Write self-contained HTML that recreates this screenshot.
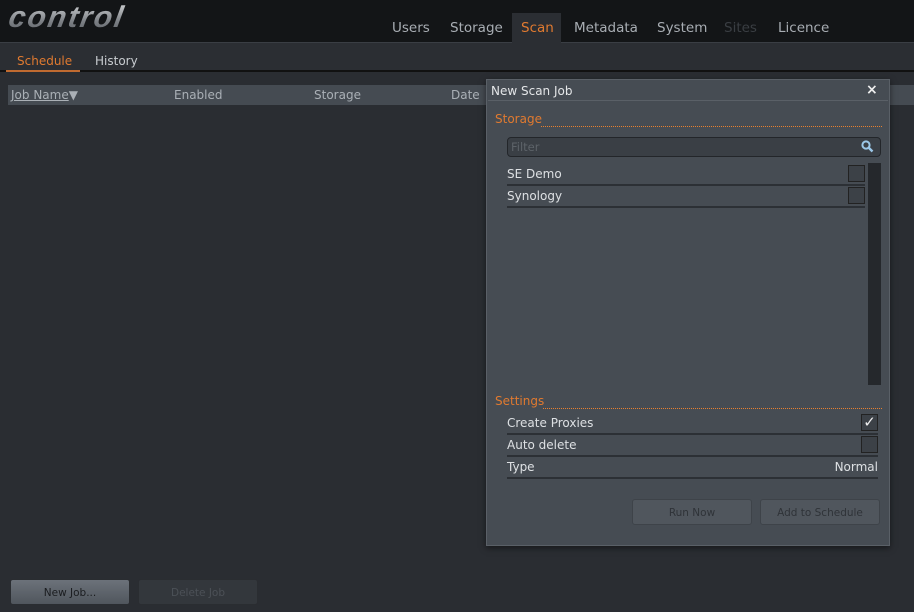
<!DOCTYPE html>
<html><head><style>
*{margin:0;padding:0;box-sizing:border-box}
body{width:914px;height:612px;overflow:hidden;background:#2a2d32;font-family:"DejaVu Sans","Liberation Sans",sans-serif;position:relative;color:#c8ccd0}
.a{position:absolute;white-space:nowrap}
.hdr{left:0;top:0;width:914px;height:43px;background:#131517;border-bottom:1px solid #3a3e44}
.logo{left:9px;top:1px;font:italic bold 30px "Liberation Sans",sans-serif;letter-spacing:2px;background:linear-gradient(#d8dadc,#7c8085 60%,#5a5e63);-webkit-background-clip:text;color:transparent;transform:skewX(-10deg)}
.nav{top:20px;font-size:13.5px;color:#a8adb3}
.sub{left:0;top:43px;width:914px;height:29px;background:#2b2e33;border-bottom:2px solid #111}
.th{left:8px;top:85px;width:906px;height:20px;background:#454b52}
.dlg{left:486px;top:79px;width:404px;height:467px;background:#464c53;border:1px solid #5a6067;box-shadow:0 2px 6px rgba(0,0,0,.5)}
.or{color:#e07a30;font-size:12px}
.row{font-size:12px;color:#dde0e3}
.ln{height:2px;background:#2c3035}
.cb{width:17px;height:17px;border:1px solid #222;background:#3c4147}
.btn{height:26px;border-radius:3px;font-size:10.5px;text-align:center;line-height:26px}
.t{font-size:12px;color:#aab0b6;top:88px}
</style></head><body>
<div class="a hdr"></div>
<div class="a logo">control</div>
<div class="a nav" style="left:392px">Users</div>
<div class="a nav" style="left:450px">Storage</div>
<div class="a" style="left:512px;top:13px;width:49px;height:31px;background:#2b2e33"></div>
<div class="a nav" style="left:521px;color:#e07a30">Scan</div>
<div class="a nav" style="left:574px">Metadata</div>
<div class="a nav" style="left:657px">System</div>
<div class="a nav" style="left:724px;color:#3a3e43">Sites</div>
<div class="a nav" style="left:778px">Licence</div>
<div class="a sub"></div>
<div class="a" style="left:17px;top:54px;font-size:12px;color:#e07a30">Schedule</div>
<div class="a" style="left:6px;top:70px;width:74px;height:2px;background:#c06a30"></div>
<div class="a" style="left:95px;top:54px;font-size:12px;color:#c8ccd0">History</div>
<div class="a th"></div>
<div class="a t" style="left:11px"><u>Job Name</u>▼</div>
<div class="a t" style="left:174px">Enabled</div>
<div class="a t" style="left:314px">Storage</div>
<div class="a t" style="left:451px">Date</div>
<div class="a dlg"></div>
<div class="a" style="left:491px;top:84px;font-size:12px;color:#e4e6e8">New Scan Job</div>
<div class="a" style="left:866px;top:82px;font-size:14px;color:#eee;font-weight:bold">×</div>
<div class="a" style="left:488px;top:100px;width:400px;height:1px;background:#5a6067"></div>
<div class="a or" style="left:495px;top:112px">Storage</div>
<div class="a" style="left:541px;top:126px;width:341px;border-top:1px dotted #e8802f"></div>
<div class="a" style="left:507px;top:137px;width:374px;height:20px;border:1px solid #23262a;border-radius:4px;background:#3a3f45"></div>
<div class="a" style="left:511px;top:140px;font-size:11.5px;color:#5d6369">Filter</div>
<svg class="a" style="left:861px;top:140px" width="13" height="13" viewBox="0 0 13 13"><circle cx="5" cy="5" r="3.6" fill="none" stroke="#9cc8e8" stroke-width="2"/><path d="M7.5 7.5L11.5 11.5" stroke="#9cc8e8" stroke-width="2.4"/></svg>
<div class="a row" style="left:507px;top:167px">SE Demo</div>
<div class="a cb" style="left:848px;top:165px"></div>
<div class="a ln" style="left:507px;top:184px;width:358px"></div>
<div class="a row" style="left:507px;top:189px">Synology</div>
<div class="a cb" style="left:848px;top:187px"></div>
<div class="a ln" style="left:507px;top:206px;width:358px"></div>
<div class="a" style="left:868px;top:163px;width:13px;height:222px;background:#25282c"></div>
<div class="a or" style="left:495px;top:394px">Settings</div>
<div class="a" style="left:543px;top:408px;width:339px;border-top:1px dotted #e8802f"></div>
<div class="a row" style="left:507px;top:416px">Create Proxies</div>
<div class="a cb" style="left:861px;top:414px;color:#eee;font-size:15px;line-height:15px;text-align:center">✓</div>
<div class="a ln" style="left:507px;top:433px;width:371px"></div>
<div class="a row" style="left:507px;top:438px">Auto delete</div>
<div class="a cb" style="left:861px;top:436px"></div>
<div class="a ln" style="left:507px;top:455px;width:371px"></div>
<div class="a row" style="left:507px;top:460px">Type</div>
<div class="a row" style="right:36px;top:460px">Normal</div>
<div class="a ln" style="left:507px;top:477px;width:371px"></div>
<div class="a btn" style="left:632px;top:499px;width:120px;background:#50565d;border:1px solid #3e4349;color:#2f3338">Run Now</div>
<div class="a btn" style="left:760px;top:499px;width:120px;background:#50565d;border:1px solid #3e4349;color:#2f3338">Add to Schedule</div>
<div class="a btn" style="left:10px;top:579px;width:120px;background:linear-gradient(#6c727a,#50565d);border:1px solid #2a2d31;color:#1a1c1f">New Job...</div>
<div class="a btn" style="left:138px;top:579px;width:120px;background:#33373c;border:1px solid #2a2d31;color:#4c5157">Delete Job</div>
</body></html>
